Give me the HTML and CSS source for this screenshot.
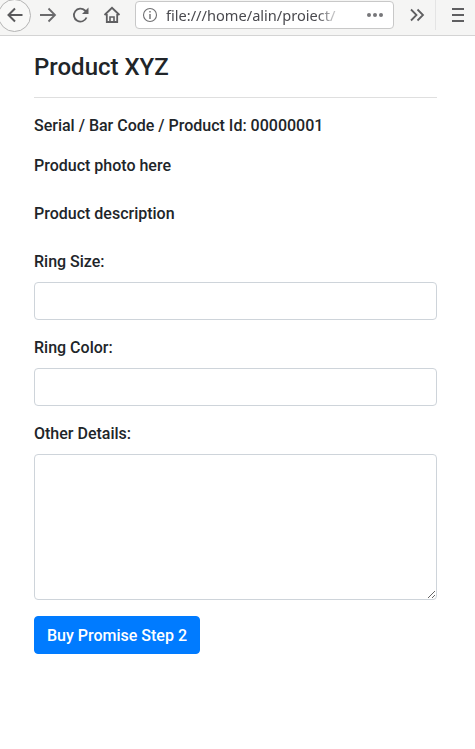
FILE: index.html
```html
<!DOCTYPE html>
<html lang="en">

<head>
    <meta charset="UTF-8">
    <meta name="viewport" content="width=device-width, initial-scale=1.0">
    <title>Product XYZ</title>
    <link rel="stylesheet" href="styles.css">
</head>

<body>
    <div class="toolbar">
        <div class="back-btn">
            <svg width="18" height="18" viewBox="0 0 18 18"><path d="M16.500 9H2.500M9 2.500 2.500 9 9 15.500" fill="none" stroke="#5a5a5c" stroke-width="2"/></svg>
        </div>
        <svg class="nav-icon" width="18" height="18" viewBox="0 0 18 18"><path d="M1 9h14M9.500 2.500 16 9l-6.500 6.500" fill="none" stroke="#6a6a6c" stroke-width="1.800"/></svg>
        <svg class="nav-icon reload" width="18" height="18" viewBox="0 0 18 18"><path d="M14.500 11.500A6.500 6.500 0 1 1 13 4.500L15 6.500" fill="none" stroke="#5f5f61" stroke-width="1.800"/><path d="M16.500 1.500v6.500h-6.500z" fill="#5f5f61"/></svg>
        <svg class="nav-icon home" width="18" height="18" viewBox="0 0 18 18"><path d="M1.500 9 9 1.800 16.500 9M3.800 8v8h10.400V8" fill="none" stroke="#5f5f61" stroke-width="1.800"/><path d="M7 16v-5h4v5" fill="none" stroke="#5f5f61" stroke-width="1.600"/></svg>
        <div class="url-bar">
            <svg width="16" height="16" viewBox="0 0 16 16"><circle cx="8" cy="8" r="6.500" fill="none" stroke="#6f6f71" stroke-width="1.100"/><path d="M8 7v5M8 4v1.600" stroke="#6f6f71" stroke-width="1.400"/></svg>
            <span class="url-text">file:///home/alin/proiect/</span>
            <span class="url-dots"><i></i><i></i><i></i></span>
        </div>
        <svg class="overflow-icon" width="16" height="14" viewBox="0 0 16 14"><path d="M2 1.500 7.500 7 2 12.500M8.500 1.500 14 7l-5.500 5.500" fill="none" stroke="#5f5f61" stroke-width="1.800"/></svg>
        <div class="menu-sep"></div>
        <div class="hamburger"><i></i><i></i><i></i></div>
    </div>

    <div class="container">
        <h3>Product XYZ</h3>
        <hr>
        <p>Serial / Bar Code / Product Id: 00000001</p>
        <p>Product photo here</p>
        <p class="desc">Product description</p>
        <form>
            <div class="form-group">
                <label for="size">Ring Size:</label>
                <input type="text" id="size" name="size">
            </div>
            <div class="form-group">
                <label for="color">Ring Color:</label>
                <input type="text" id="color" name="color">
            </div>
            <div class="form-group">
                <label for="details">Other Details:</label>
                <textarea id="details" name="details"></textarea>
            </div>
            <button type="button">Buy Promise Step 2</button>
        </form>
    </div>
</body>

</html>
```

FILE: styles.css
```css
* {
    box-sizing: border-box;
}

body {
    font-family: Roboto, sans-serif;
    font-size: 16px;
    line-height: 24px;
    font-weight: 500;
    color: #212529;
    background-color: #fff;
    margin: 0;
    height: 749px;
    overflow: hidden;
}

.toolbar {
    display: flex;
    align-items: center;
    height: 36px;
    padding-bottom: 5px;
    background-color: #f5f5f4;
    border-bottom: 1px solid #d4d4d4;
    overflow: hidden;
}

.back-btn {
    display: flex;
    align-items: center;
    justify-content: center;
    flex: none;
    width: 33px;
    height: 33px;
    margin-left: -2px;
    border: 1px solid #b4b4b4;
    border-radius: 50%;
    background-color: #f8f8f7;
}

.nav-icon {
    flex: none;
    margin-left: 8px;
}

.reload {
    margin-left: 15px;
}

.home {
    margin-left: 13px;
}

.url-bar {
    display: flex;
    align-items: center;
    flex: none;
    width: 259px;
    height: 28px;
    margin-left: 14px;
    padding: 0 9px 0 6px;
    background-color: #fff;
    border: 1px solid #c8c8c8;
    border-radius: 4px;
}

.url-text {
    width: 172px;
    margin-left: 8px;
    overflow: hidden;
    white-space: nowrap;
    font-family: "Noto Sans", sans-serif;
    font-size: 14.600px;
    font-weight: 400;
    color: #4a4a4f;
    -webkit-mask-image: linear-gradient(to right, #000 88%, rgba(0, 0, 0, 0.35) 97%);
    mask-image: linear-gradient(to right, #000 88%, rgba(0, 0, 0, 0.35) 97%);
}

.url-dots {
    display: flex;
    gap: 2px;
    margin-left: auto;
    margin-right: 1px;
}

.url-dots i {
    width: 4px;
    height: 4px;
    border-radius: 50%;
    background-color: #77777a;
}

.overflow-icon {
    flex: none;
    margin-left: 15px;
}

.menu-sep {
    flex: none;
    width: 1px;
    height: 30px;
    margin-left: 10px;
    background-color: #e4e4e4;
}

.hamburger {
    display: flex;
    flex-direction: column;
    gap: 4px;
    flex: none;
    width: 12px;
    margin-left: 16px;
}

.hamburger i {
    height: 2px;
    background-color: #5f5f61;
}

.container {
    width: 403px;
    margin-left: 34px;
}

h3 {
    margin: 15px 0 0;
    font-size: 24px;
    line-height: 32px;
    font-weight: 500;
}

hr {
    margin: 14px 0 16px;
    border: 0;
    border-top: 1px solid #dfdfdf;
}

p {
    margin: 0 0 16px;
}

.desc {
    margin-top: 24px;
    margin-bottom: 24px;
}

.form-group {
    margin-bottom: 16px;
}

.form-group label {
    display: block;
    margin-bottom: 8px;
}

.form-group input,
.form-group textarea {
    display: block;
    width: 100%;
    padding: 6px 12px;
    background-color: #fff;
    border: 1px solid #ced4da;
    border-radius: 4px;
}

.form-group input {
    height: 38px;
}

.form-group textarea {
    height: 146px;
}

button {
    display: block;
    height: 38px;
    padding: 0 12px;
    font-family: inherit;
    font-size: 16px;
    font-weight: 500;
    color: #fff;
    background-color: #007bff;
    border: 1px solid #007bff;
    border-radius: 4px;
}
```
